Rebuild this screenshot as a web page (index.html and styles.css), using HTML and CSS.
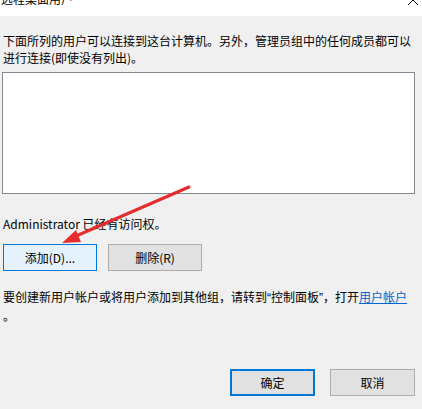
FILE: index.html
```html
<!DOCTYPE html>
<html lang="zh-CN">
<head>
  <meta charset="UTF-8" />
  <meta name="viewport" content="width=device-width, initial-scale=1.0"/>
  <title>远程桌面用户</title>
  <link rel="stylesheet" href="styles.css">
</head>
<body>
<div class="titlebar">
  <span class="title">远程桌面用户</span>
  <svg class="close" width="12" height="12" viewBox="0 0 12 12">
    <path d="M1 1 L11 11 M11 1 L1 11" stroke="#000" stroke-width="1" fill="none"/>
  </svg>
</div>

<div class="content">
  <p class="intro">下面所列的用户可以连接到这台计算机。另外，管理员组中的任何成员都可以进行连接(即使没有列出)。</p>

  <div class="listbox"></div>

  <p class="status">Administrator 已经有访问权。</p>

  <div class="row">
    <button class="btn btn-hot">添加(D)...</button>
    <button class="btn">删除(R)</button>
  </div>

  <p class="hint">要创建新用户帐户或将用户添加到其他组，请转到<span class="q">“</span>控制面板<span class="q">”</span>，打开<a href="#">用户帐户</a><br>。</p>

  <div class="row footer">
    <button class="btn btn-default">确定</button>
    <button class="btn">取消</button>
  </div>
</div>

<svg class="arrow" width="422" height="409" viewBox="0 0 422 409">
  <line x1="189" y1="187" x2="76" y2="236" stroke="#e52d2d" stroke-width="3" stroke-linecap="round"/>
  <polygon points="62,243 76,230 81,242" fill="#e52d2d"/>
</svg>
</body>
</html>
```

FILE: styles.css
```css
body {
  margin: 0;
  background: #f0f0f0;
  font-family: "Noto Sans CJK SC", "Microsoft YaHei", sans-serif;
  font-size: 12px;
  color: #000;
  width: 422px;
  height: 409px;
  overflow: hidden;
  position: relative;
}
.titlebar {
  height: 16px;
  background: #fff;
  overflow: hidden;
  display: flex;
  justify-content: space-between;
}
.title {
  display: block;
  line-height: 16px;
  margin-top: -9px;
  padding-left: 1px;
}
.close {
  margin-top: -6px;
  margin-right: 3px;
}
.content {
  padding: 0 7px 0 2px;
}
p {
  margin: 0;
  line-height: 17px;
  padding-left: 1px;
}
.intro {
  margin-top: 16px;
}
.listbox {
  margin-top: 6px;
  height: 120px;
  background: #fff;
  border: 1px solid #828790;
}
.status {
  margin-top: 21px;
}
.row {
  display: flex;
  gap: 11px;
  margin-top: 12px;
  padding-left: 1px;
}
.btn {
  width: 94px;
  height: 27px;
  padding: 0;
  margin: 0;
  font: inherit;
  color: #000;
  background: #e1e1e1;
  border: 1px solid #adadad;
  box-sizing: border-box;
}
.btn-hot {
  background: #e5f1fb;
  border-color: #0078d7;
}
.hint {
  margin-top: 17px;
}
.hint .q {
  font-family: "Liberation Sans", sans-serif;
}
.hint a {
  color: #0066cc;
  white-space: nowrap;
}
.footer {
  justify-content: flex-end;
  gap: 15px;
  margin-top: 45px;
}
.footer .btn {
  width: 85px;
}
.btn-default {
  border: 2px solid #0078d7;
}
.arrow {
  position: absolute;
  left: 0;
  top: 0;
  pointer-events: none;
}
```
